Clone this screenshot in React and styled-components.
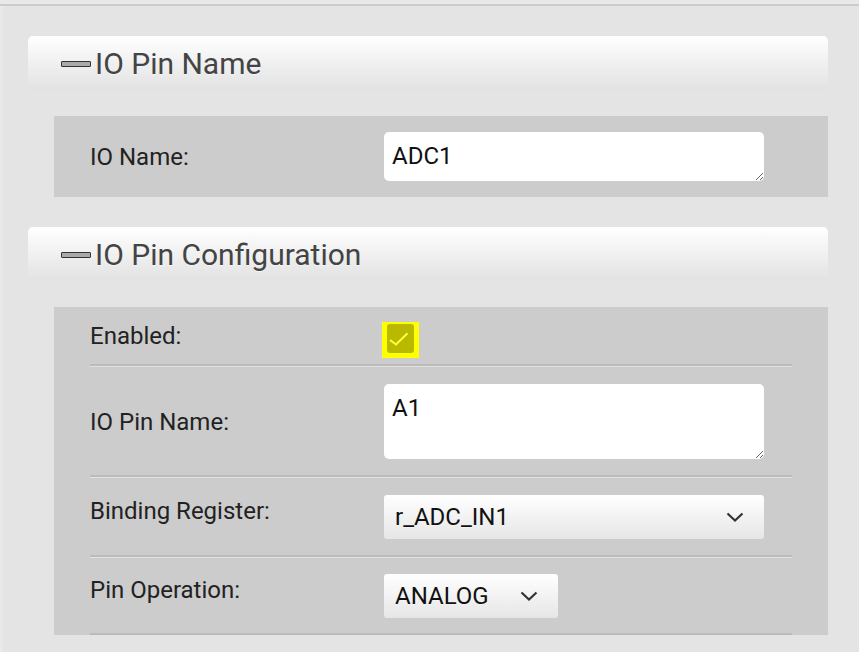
import React from "react";
import styled, { createGlobalStyle } from "styled-components";

const GlobalStyle = createGlobalStyle`
  html, body {
    margin: 0;
    padding: 0;
    background: #e9e9e9;
    font-family: Roboto, "Liberation Sans", Arial, sans-serif;
  }
`;

const TopStrip = styled.div`
  height: 4px;
  border-bottom: 2px solid #cccccc;
`;

const Page = styled.div`
  margin-left: 3px;
  min-height: 646px;
  background: #e4e4e4;
  padding: 30px 31px 0 25px;
  box-sizing: border-box;
`;

const SectionHeader = styled.div`
  display: flex;
  align-items: center;
  gap: 4px;
  height: 54px;
  padding-left: 33px;
  border-radius: 5px;
  background: linear-gradient(#ffffff, #e2e2e2);
  color: #444;
  font-size: 30px;
  text-shadow: 0 1px 0 #f3f3f3;
  box-sizing: border-box;
`;

const MinusIcon = styled.span`
  display: inline-block;
  width: 28px;
  height: 4px;
  background: #aaaaaa;
  border: 1px solid #333;
  border-radius: 1px;
  margin-top: 1px;
`;

const Panel = styled.div`
  margin: 26px 0 30px 26px;
  background: #cccccc;
  padding: ${(p) => (p.$rows ? "0 36px" : "16px 36px 16px 36px")};
`;

const Row = styled.div`
  display: flex;
  align-items: ${(p) => p.$align || "flex-start"};
  padding: ${(p) => p.$pad || "17px 0 16px"};
  border-bottom: ${(p) => (p.$line ? "2px solid #bbbbbb" : "none")};
  box-shadow: ${(p) => (p.$line ? "0 1px 0 #e2e2e2" : "none")};
  margin-bottom: ${(p) => (p.$line ? "1px" : "0")};
`;

const Label = styled.div`
  width: 294px;
  flex: none;
  font-size: 24px;
  line-height: 28px;
  color: #222;
  padding-top: ${(p) => p.$top || "0"};
`;

const TextBox = styled.textarea`
  width: 380px;
  height: ${(p) => p.$h}px;
  box-sizing: border-box;
  border: none;
  border-radius: 5px;
  background: #fff;
  padding: 10px 8px;
  font-family: Roboto, "Liberation Sans", Arial, sans-serif;
  font-size: 24px;
  line-height: 28px;
  color: #111;
  resize: vertical;
  outline: none;
  display: block;
`;

const Check = styled.div`
  width: 37px;
  height: 36px;
  margin-left: -2px;
  background: #ffff00;
  position: relative;
`;

const CheckInner = styled.div`
  position: absolute;
  left: 5px;
  top: 2px;
  width: 27px;
  height: 29px;
  border-radius: 3px;
  background: #b9b900;
`;

const CheckMark = styled.svg`
  position: absolute;
  left: 0;
  top: 0;
`;

const Select = styled.div`
  width: ${(p) => p.$w}px;
  height: 44px;
  box-sizing: border-box;
  display: flex;
  align-items: center;
  justify-content: space-between;
  padding: 0 20px 0 11px;
  border-radius: 3px;
  background: linear-gradient(#ffffff, #e6e6e6);
  font-size: 24px;
  color: #111;
  text-shadow: 0 1px 0 #f3f3f3;
`;

const Chevron = () => (
  <svg width="18" height="10" viewBox="0 0 18 10">
    <path d="M1.5 1.5 L9 8.5 L16.5 1.5" fill="none" stroke="#333" strokeWidth="2.2" />
  </svg>
);

export default function App() {
  return (
    <>
      <GlobalStyle />
      <TopStrip />
      <Page>
        <SectionHeader>
          <MinusIcon />
          IO Pin Name
        </SectionHeader>
        <Panel>
          <Row $align="center" $pad="0">
            <Label>IO Name:</Label>
            <TextBox $h={49} defaultValue="ADC1" />
          </Row>
        </Panel>

        <SectionHeader>
          <MinusIcon />
          IO Pin Configuration
        </SectionHeader>
        <Panel $rows>
          <Row $line $pad="15px 0 6px">
            <Label>Enabled:</Label>
            <Check>
              <CheckInner />
              <CheckMark width="37" height="36" viewBox="0 0 37 36">
                <path d="M8 18 L14 22.5 L25.5 11.3" fill="none" stroke="#ffff40" strokeWidth="2" />
              </CheckMark>
            </Check>
          </Row>
          <Row $line $align="center">
            <Label>IO Pin Name:</Label>
            <TextBox $h={75} defaultValue="A1" />
          </Row>
          <Row $line>
            <Label $top="2px">Binding Register:</Label>
            <Select $w={380}>
              r_ADC_IN1
              <Chevron />
            </Select>
          </Row>
          <Row $line $pad="16px 0 15px">
            <Label $top="2px">Pin Operation:</Label>
            <Select $w={174}>
              ANALOG
              <Chevron />
            </Select>
          </Row>
        </Panel>
      </Page>
    </>
  );
}
